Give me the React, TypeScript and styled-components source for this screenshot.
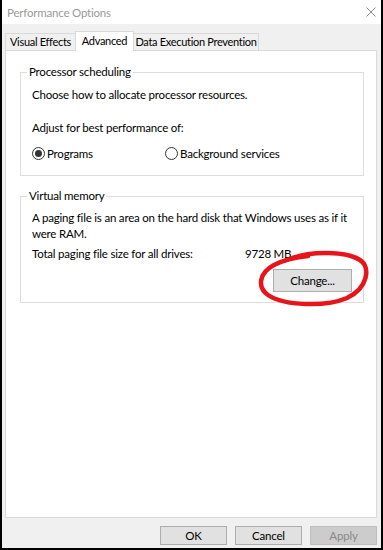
import React from "react";
import styled, { createGlobalStyle } from "styled-components";

const GlobalStyle = createGlobalStyle`
  html, body { margin: 0; padding: 0; background: #ffffff; }
  * { box-sizing: border-box; }
`;

const FONT = `Lato, "Noto Sans", Arial, sans-serif`;

const Window = styled.div`
  position: relative;
  width: 383px;
  height: 550px;
  border-left: 2px solid #000;
  border-right: 2px solid #000;
  border-bottom: 2px solid #000;
  background: #f0f0f0;
  font-family: ${FONT};
  font-size: 11.5px;
  letter-spacing: -0.2px;
  color: #000;
  display: flex;
  flex-direction: column;
`;

const TitleBar = styled.div`
  height: 24px;
  background: #ffffff;
  display: flex;
  align-items: center;
  justify-content: space-between;
  padding: 0 5px 0 5px;
`;

const Title = styled.span`
  color: #9a9a9a;
  font-size: 11.5px;
`;

const Body = styled.div`
  flex: 1;
  display: flex;
  flex-direction: column;
  padding: 7px 4px 0 3px;
`;

const TabStrip = styled.div`
  display: flex;
  align-items: flex-end;
  height: 20px;
  margin-bottom: -1px;
  position: relative;
  z-index: 1;
`;

const Tab = styled.div<{ $active?: boolean; $w: number }>`
  width: ${(p) => p.$w}px;
  height: ${(p) => (p.$active ? 20 : 18)}px;
  padding-top: ${(p) => (p.$active ? "1px" : "0")};
  margin: ${(p) => (p.$active ? "0 -1px" : "0")};
  border: 1px solid #d9d9d9;
  border-bottom: ${(p) => (p.$active ? "none" : "1px solid #d9d9d9")};
  background: ${(p) => (p.$active ? "#ffffff" : "#f0f0f0")};
  position: relative;
  z-index: ${(p) => (p.$active ? 2 : 1)};
  display: flex;
  justify-content: center;
  align-items: ${(p) => (p.$active ? "flex-start" : "center")};
  font-size: 11px;
  letter-spacing: -0.3px;
  line-height: 16px;
  white-space: nowrap;
`;

const Panel = styled.div`
  height: 468px;
  background: #ffffff;
  border: 1px solid #d9d9d9;
  padding: 13px 12px 0 14px;
  display: flex;
  flex-direction: column;
  gap: 12px;
`;

const Group = styled.fieldset`
  margin: 0;
  border: 1px solid #dcdcdc;
  padding: 0 10px 0 11px;
  min-width: 0;
`;

const Legend = styled.legend`
  padding: 0 2px;
  margin-left: -5px;
  line-height: 16px;
`;

const Line = styled.div<{ $mt?: number }>`
  line-height: 16px;
  margin-top: ${(p) => p.$mt ?? 0}px;
  white-space: nowrap;
`;

const RadioRow = styled.div`
  display: flex;
  align-items: center;
  margin-top: 9px;
  height: 16px;
  margin-bottom: 14px;
`;

const RadioItem = styled.label<{ $w?: number }>`
  display: flex;
  align-items: center;
  gap: 2px;
  width: ${(p) => (p.$w ? `${p.$w}px` : "auto")};
`;

const RadioCircle = styled.span<{ $checked?: boolean }>`
  width: 13px;
  height: 13px;
  border-radius: 50%;
  border: 1px solid #333;
  background: #fff;
  display: flex;
  align-items: center;
  justify-content: center;
  &::after {
    content: "";
    display: ${(p) => (p.$checked ? "block" : "none")};
    width: 7px;
    height: 7px;
    border-radius: 50%;
    background: #333;
  }
`;

const SizeRow = styled.div`
  display: flex;
  margin-top: 4px;
  line-height: 16px;
`;

const SizeLabel = styled.span`
  width: 213px;
`;

const ButtonRow = styled.div`
  display: flex;
  justify-content: flex-end;
  gap: 8px;
`;

const Button = styled.button<{ $w: number; $h?: number; $disabled?: boolean }>`
  width: ${(p) => p.$w}px;
  height: ${(p) => p.$h ?? 23}px;
  font-family: ${FONT};
  font-size: 11.5px;
  letter-spacing: -0.2px;
  color: ${(p) => (p.$disabled ? "#8a8a8a" : "#000")};
  background: ${(p) => (p.$disabled ? "#cccccc" : "#e1e1e1")};
  border: 1px solid ${(p) => (p.$disabled ? "#bfbfbf" : "#adadad")};
  padding: 0;
  margin: 0;
`;

const ChangeWrap = styled.div`
  display: flex;
  justify-content: flex-end;
  margin-top: 7px;
  margin-bottom: 10px;
  padding-right: 1px;
`;

const Footer = styled.div`
  padding: 8px 0 0 0;
`;

const RedMark = styled.svg`
  position: absolute;
  left: 252px;
  top: 249px;
  pointer-events: none;
`;

const CloseIcon = () => (
  <svg width="10" height="10" viewBox="0 0 10 10">
    <path d="M0.5 0.5 L9.5 9.5 M9.5 0.5 L0.5 9.5" stroke="#8c8c8c" strokeWidth="1" fill="none" />
  </svg>
);

export default function App() {
  return (
    <>
      <GlobalStyle />
      <Window>
        <TitleBar>
          <Title>Performance Options</Title>
          <CloseIcon />
        </TitleBar>
        <Body>
          <TabStrip>
            <Tab $w={71}>Visual Effects</Tab>
            <Tab $w={59} $active>
              Advanced
            </Tab>
            <Tab $w={126}>Data Execution Prevention</Tab>
          </TabStrip>
          <Panel>
            <Group>
              <Legend>Processor scheduling</Legend>
              <Line $mt={7}>Choose how to allocate processor resources.</Line>
              <Line $mt={17}>Adjust for best performance of:</Line>
              <RadioRow>
                <RadioItem $w={133}>
                  <RadioCircle $checked />
                  Programs
                </RadioItem>
                <RadioItem>
                  <RadioCircle />
                  Background services
                </RadioItem>
              </RadioRow>
            </Group>
            <Group>
              <Legend>Virtual memory</Legend>
              <Line $mt={6}>
                A paging file is an area on the hard disk that Windows uses as if it
                <br />
                were RAM.
              </Line>
              <SizeRow>
                <SizeLabel>Total paging file size for all drives:</SizeLabel>
                <span>9728 MB</span>
              </SizeRow>
              <ChangeWrap>
                <Button $w={79}>Change...</Button>
              </ChangeWrap>
            </Group>
          </Panel>
          <Footer>
            <ButtonRow>
              <Button $w={67} $h={19}>OK</Button>
              <Button $w={67} $h={19}>Cancel</Button>
              <Button $w={67} $h={19} $disabled>
                Apply
              </Button>
            </ButtonRow>
          </Footer>
        </Body>
        <RedMark width="116" height="60" viewBox="0 0 116 60">
          <path
            d="M38 9 C58 2, 92 2, 106 11 C117 18, 114 39, 93 49 C72 58, 30 57, 14 46 C3 38, 5 24, 20 16 C30 11, 42 8, 54 7"
            stroke="#e8141b"
            strokeWidth="4.5"
            fill="none"
            strokeLinecap="round"
          />
        </RedMark>
      </Window>
    </>
  );
}
